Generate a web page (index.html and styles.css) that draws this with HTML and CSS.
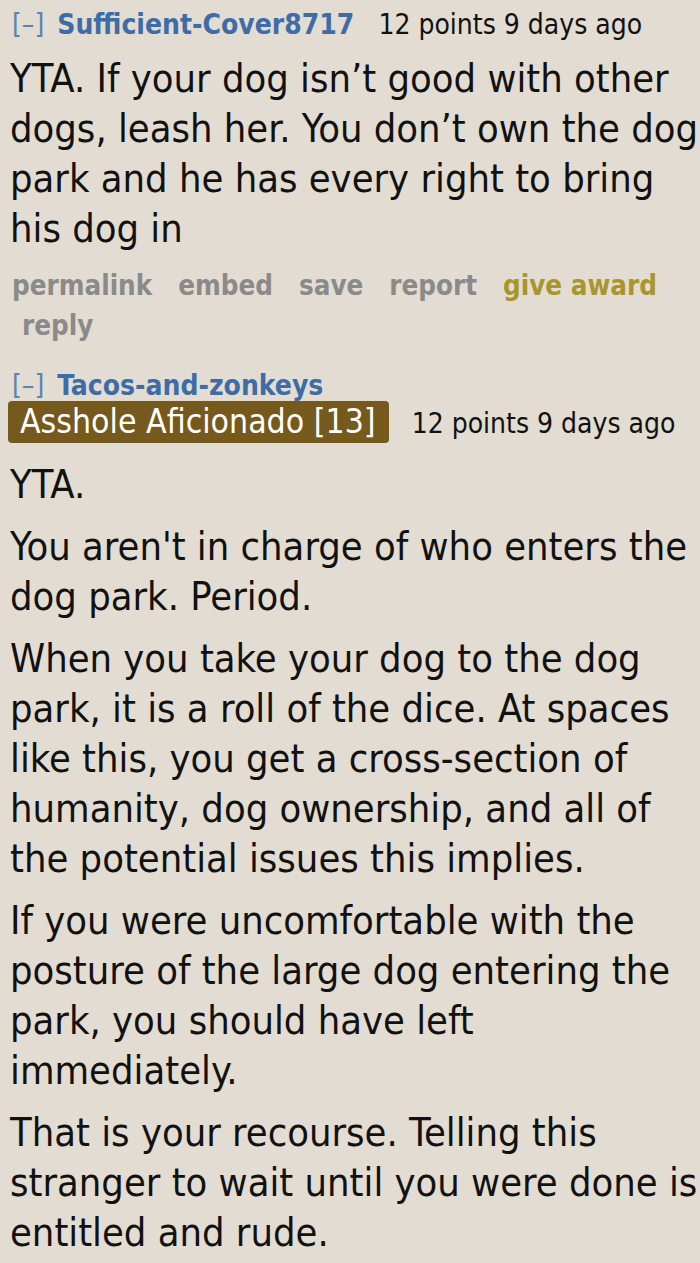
FILE: index.html
```html
<!DOCTYPE html>
<html lang="en">
<head>
  <meta charset="UTF-8">
  <title>Comments</title>
  <link rel="stylesheet" href="styles.css">
</head>
<body>
  <div class="comment">
    <div class="tagline">
      <span class="expand">[–]</span>
      <span class="author">Sufficient-Cover8717</span>
      <span class="score">12 points 9 days ago</span>
    </div>
    <div class="md">
      <p>YTA. If your dog isn’t good with other dogs, leash her. You don’t own the dog park and he has every right to bring his dog in</p>
    </div>
    <ul class="buttons">
      <li>permalink</li>
      <li>embed</li>
      <li>save</li>
      <li>report</li>
      <li class="award">give award</li>
      <li>reply</li>
    </ul>
  </div>

  <div class="comment">
    <div class="tagline name-line">
      <span class="expand">[–]</span>
      <span class="author">Tacos-and-zonkeys</span>
    </div>
    <div class="tagline flair-line">
      <span class="flair">Asshole Aficionado [13]</span>
      <span class="score">12 points 9 days ago</span>
    </div>
    <div class="md">
      <p>YTA.</p>
      <p>You aren't in charge of who enters the dog park. Period.</p>
      <p>When you take your dog to the dog park, it is a roll of the dice. At spaces like this, you get a cross-section of humanity, dog ownership, and all of the potential issues this implies.</p>
      <p>If you were uncomfortable with the posture of the large dog entering the park, you should have left immediately.</p>
      <p>That is your recourse. Telling this stranger to wait until you were done is entitled and rude.</p>
    </div>
  </div>
</body>
</html>
```

FILE: styles.css
```css
body {
  margin: 0;
  padding: 4px 0 0 10px;
  background-color: #e3dcd2;
  font-family: "DejaVu Sans Condensed", "DejaVu Sans", sans-serif;
  font-stretch: condensed;
  color: #111;
}

.tagline {
  display: flex;
  align-items: baseline;
  font-size: 28px;
  line-height: 42px;
}

.expand {
  color: #5d83b5;
  margin-right: 13px;
  margin-left: 2px;
}

.author {
  color: #3d6ca6;
  font-weight: bold;
  margin-right: 24px;
}

.score {
  color: #111;
}

.md {
  margin-top: 7px;
}

.md p {
  margin: 0 0 12px 0;
  font-size: 39.5px;
  line-height: 50px;
}

.buttons {
  list-style: none;
  margin: 0;
  padding: 0 0 0 2px;
  display: flex;
  flex-wrap: wrap;
  font-size: 27.5px;
  font-weight: bold;
  line-height: 40px;
  color: #8a8a8a;
}

.buttons li {
  margin-right: 26px;
}

.buttons li:last-child {
  margin-left: 10px;
}

.buttons .award {
  color: #a8952c;
}

.comment + .comment {
  margin-top: 26px;
}

.name-line {
  line-height: 30px;
}

.flair-line {
  line-height: 42px;
}

.flair-line + .md {
  margin-top: 14px;
}

.flair {
  display: inline-block;
  margin-left: -2px;
  background-color: #76591c;
  color: #fff;
  border-radius: 4px;
  padding: 0 13px 0 12px;
  margin-right: 23px;
  font-size: 33.5px;
  line-height: 42px;
}
```
